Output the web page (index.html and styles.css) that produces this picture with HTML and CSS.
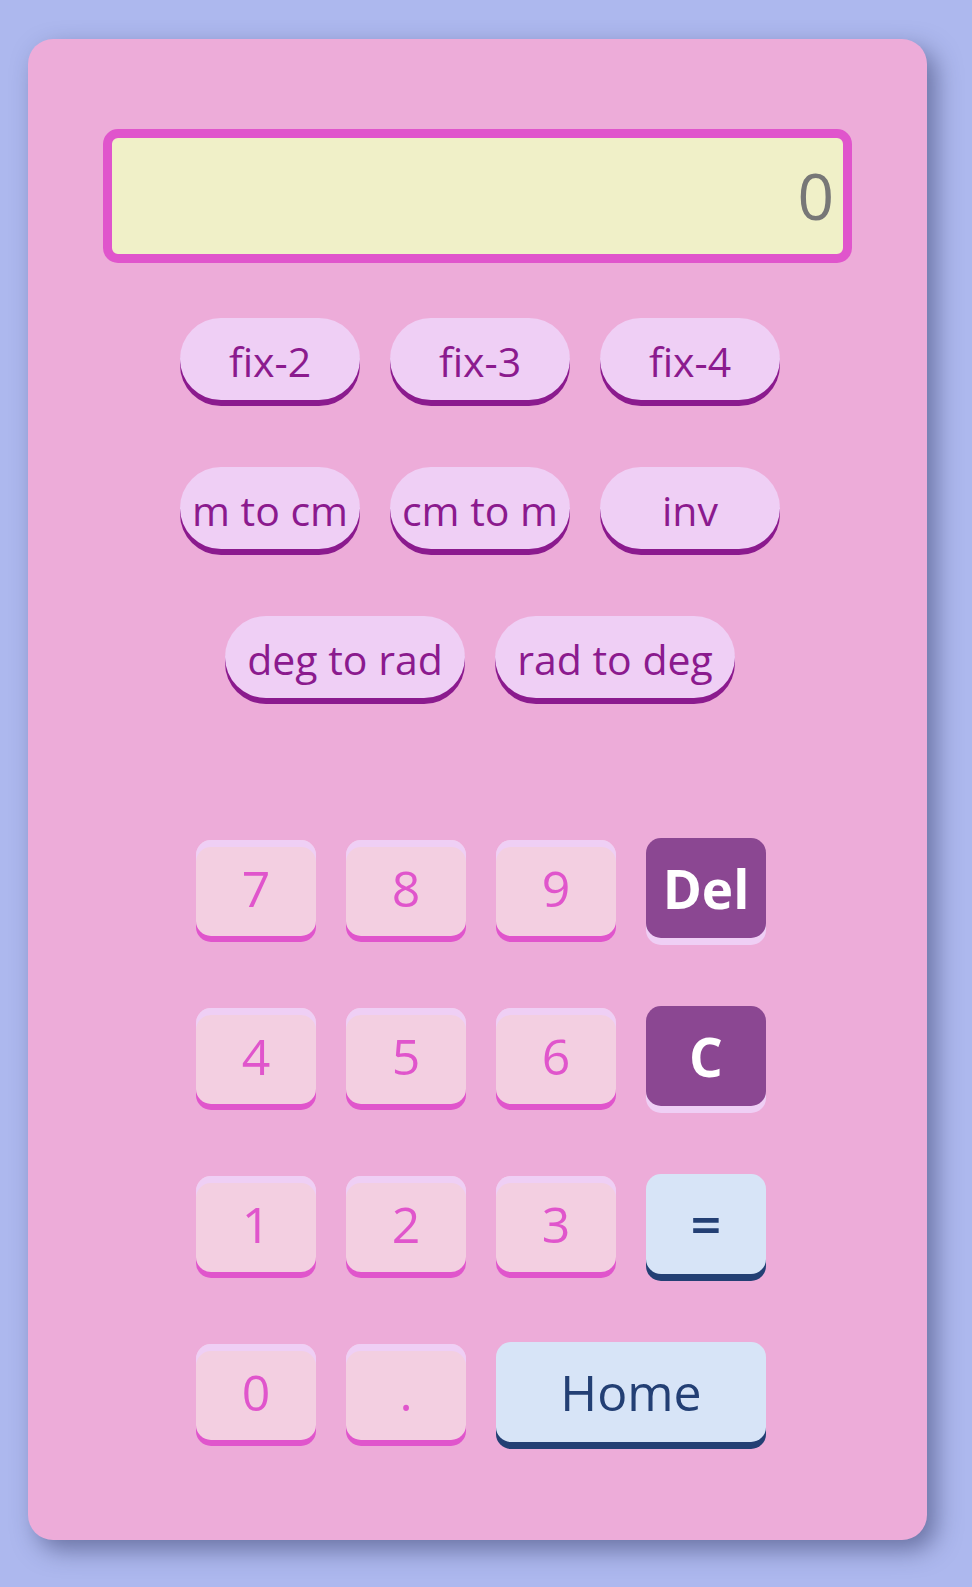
FILE: index.html
```html
<!DOCTYPE html>
<html lang="en">
<head>
<meta charset="utf-8">
<title>Calculator</title>
<link rel="stylesheet" href="styles.css">
</head>
<body>
<div class="calc">
  <div class="display"><span class="display-value">0</span></div>
  <div class="controls">
    <div class="pill-row">
      <button class="pill">fix-2</button>
      <button class="pill">fix-3</button>
      <button class="pill">fix-4</button>
    </div>
    <div class="pill-row">
      <button class="pill">m to cm</button>
      <button class="pill">cm to m</button>
      <button class="pill">inv</button>
    </div>
    <div class="pill-row">
      <button class="pill pill-wide">deg to rad</button>
      <button class="pill pill-wide">rad to deg</button>
    </div>
    <div class="keypad">
      <button class="key num">7</button>
      <button class="key num">8</button>
      <button class="key num">9</button>
      <button class="key action">Del</button>
      <button class="key num">4</button>
      <button class="key num">5</button>
      <button class="key num">6</button>
      <button class="key action">C</button>
      <button class="key num">1</button>
      <button class="key num">2</button>
      <button class="key num">3</button>
      <button class="key blue equals">=</button>
      <button class="key num">0</button>
      <button class="key num">.</button>
      <button class="key blue home">Home</button>
    </div>
  </div>
</div>
</body>
</html>
```

FILE: styles.css
```css
* {
  box-sizing: border-box;
}

html, body {
  margin: 0;
  padding: 0;
}

body {
  background: #adb8ee;
  font-family: "Open Sans", "DejaVu Sans", sans-serif;
  padding: 39px 0 0 28px;
  min-height: 1587px;
}

.calc {
  width: 899px;
  height: 1501px;
  background: #edacd9;
  border-radius: 25px;
  padding: 90px 75px 0 75px;
  box-shadow: 9px 10px 24px rgba(40, 45, 90, 0.5);
}

.display {
  height: 134px;
  border: 9px solid #e055cc;
  border-radius: 15px;
  background: #f0f0c8;
  display: flex;
  align-items: center;
  justify-content: flex-end;
  padding-right: 9px;
}

.display-value {
  font-size: 64px;
  color: #777777;
  line-height: 1;
}

.controls {
  padding-left: 5px;
  padding-top: 55px;
  display: flex;
  flex-direction: column;
  align-items: center;
}

.pill-row {
  display: flex;
  justify-content: center;
  gap: 30px;
  margin-bottom: 67px;
}

.pill {
  width: 180px;
  height: 82px;
  border: none;
  border-radius: 41px;
  background: #efcff5;
  color: #8b1a8e;
  font-family: "Open Sans", "DejaVu Sans", sans-serif;
  font-size: 41px;
  padding: 4px 0 0 0;
  box-shadow: 0 6px 0 #8b1a8e;
  display: flex;
  align-items: center;
  justify-content: center;
  white-space: nowrap;
}

.pill-wide {
  width: 240px;
}

.keypad {
  margin-top: 73px;
  display: grid;
  grid-template-columns: repeat(4, 120px);
  grid-auto-rows: 100px;
  column-gap: 30px;
  row-gap: 68px;
  padding-left: 2px;
}

.key {
  border: none;
  padding: 0;
  border-radius: 15px;
  font-family: "Open Sans", "DejaVu Sans", sans-serif;
  font-size: 50px;
  display: flex;
  align-items: center;
  justify-content: center;
  align-self: center;
  height: 100px;
  line-height: 1;
}

.num {
  height: 96px;
  background: #f3cfe1;
  color: #e055cc;
  box-shadow: inset 0 7px 0 #efcff5, 0 6px 0 #e055cc;
}

.action {
  background: #8b4792;
  color: #ffffff;
  font-weight: 700;
  font-size: 53px;
  box-shadow: 0 7px 0 #efcff5;
}

.blue {
  background: #d7e4f7;
  color: #233f74;
  box-shadow: 0 7px 0 #233f74;
}

.equals {
  font-size: 54px;
  font-weight: 600;
}

.home {
  grid-column: span 2;
}
```
